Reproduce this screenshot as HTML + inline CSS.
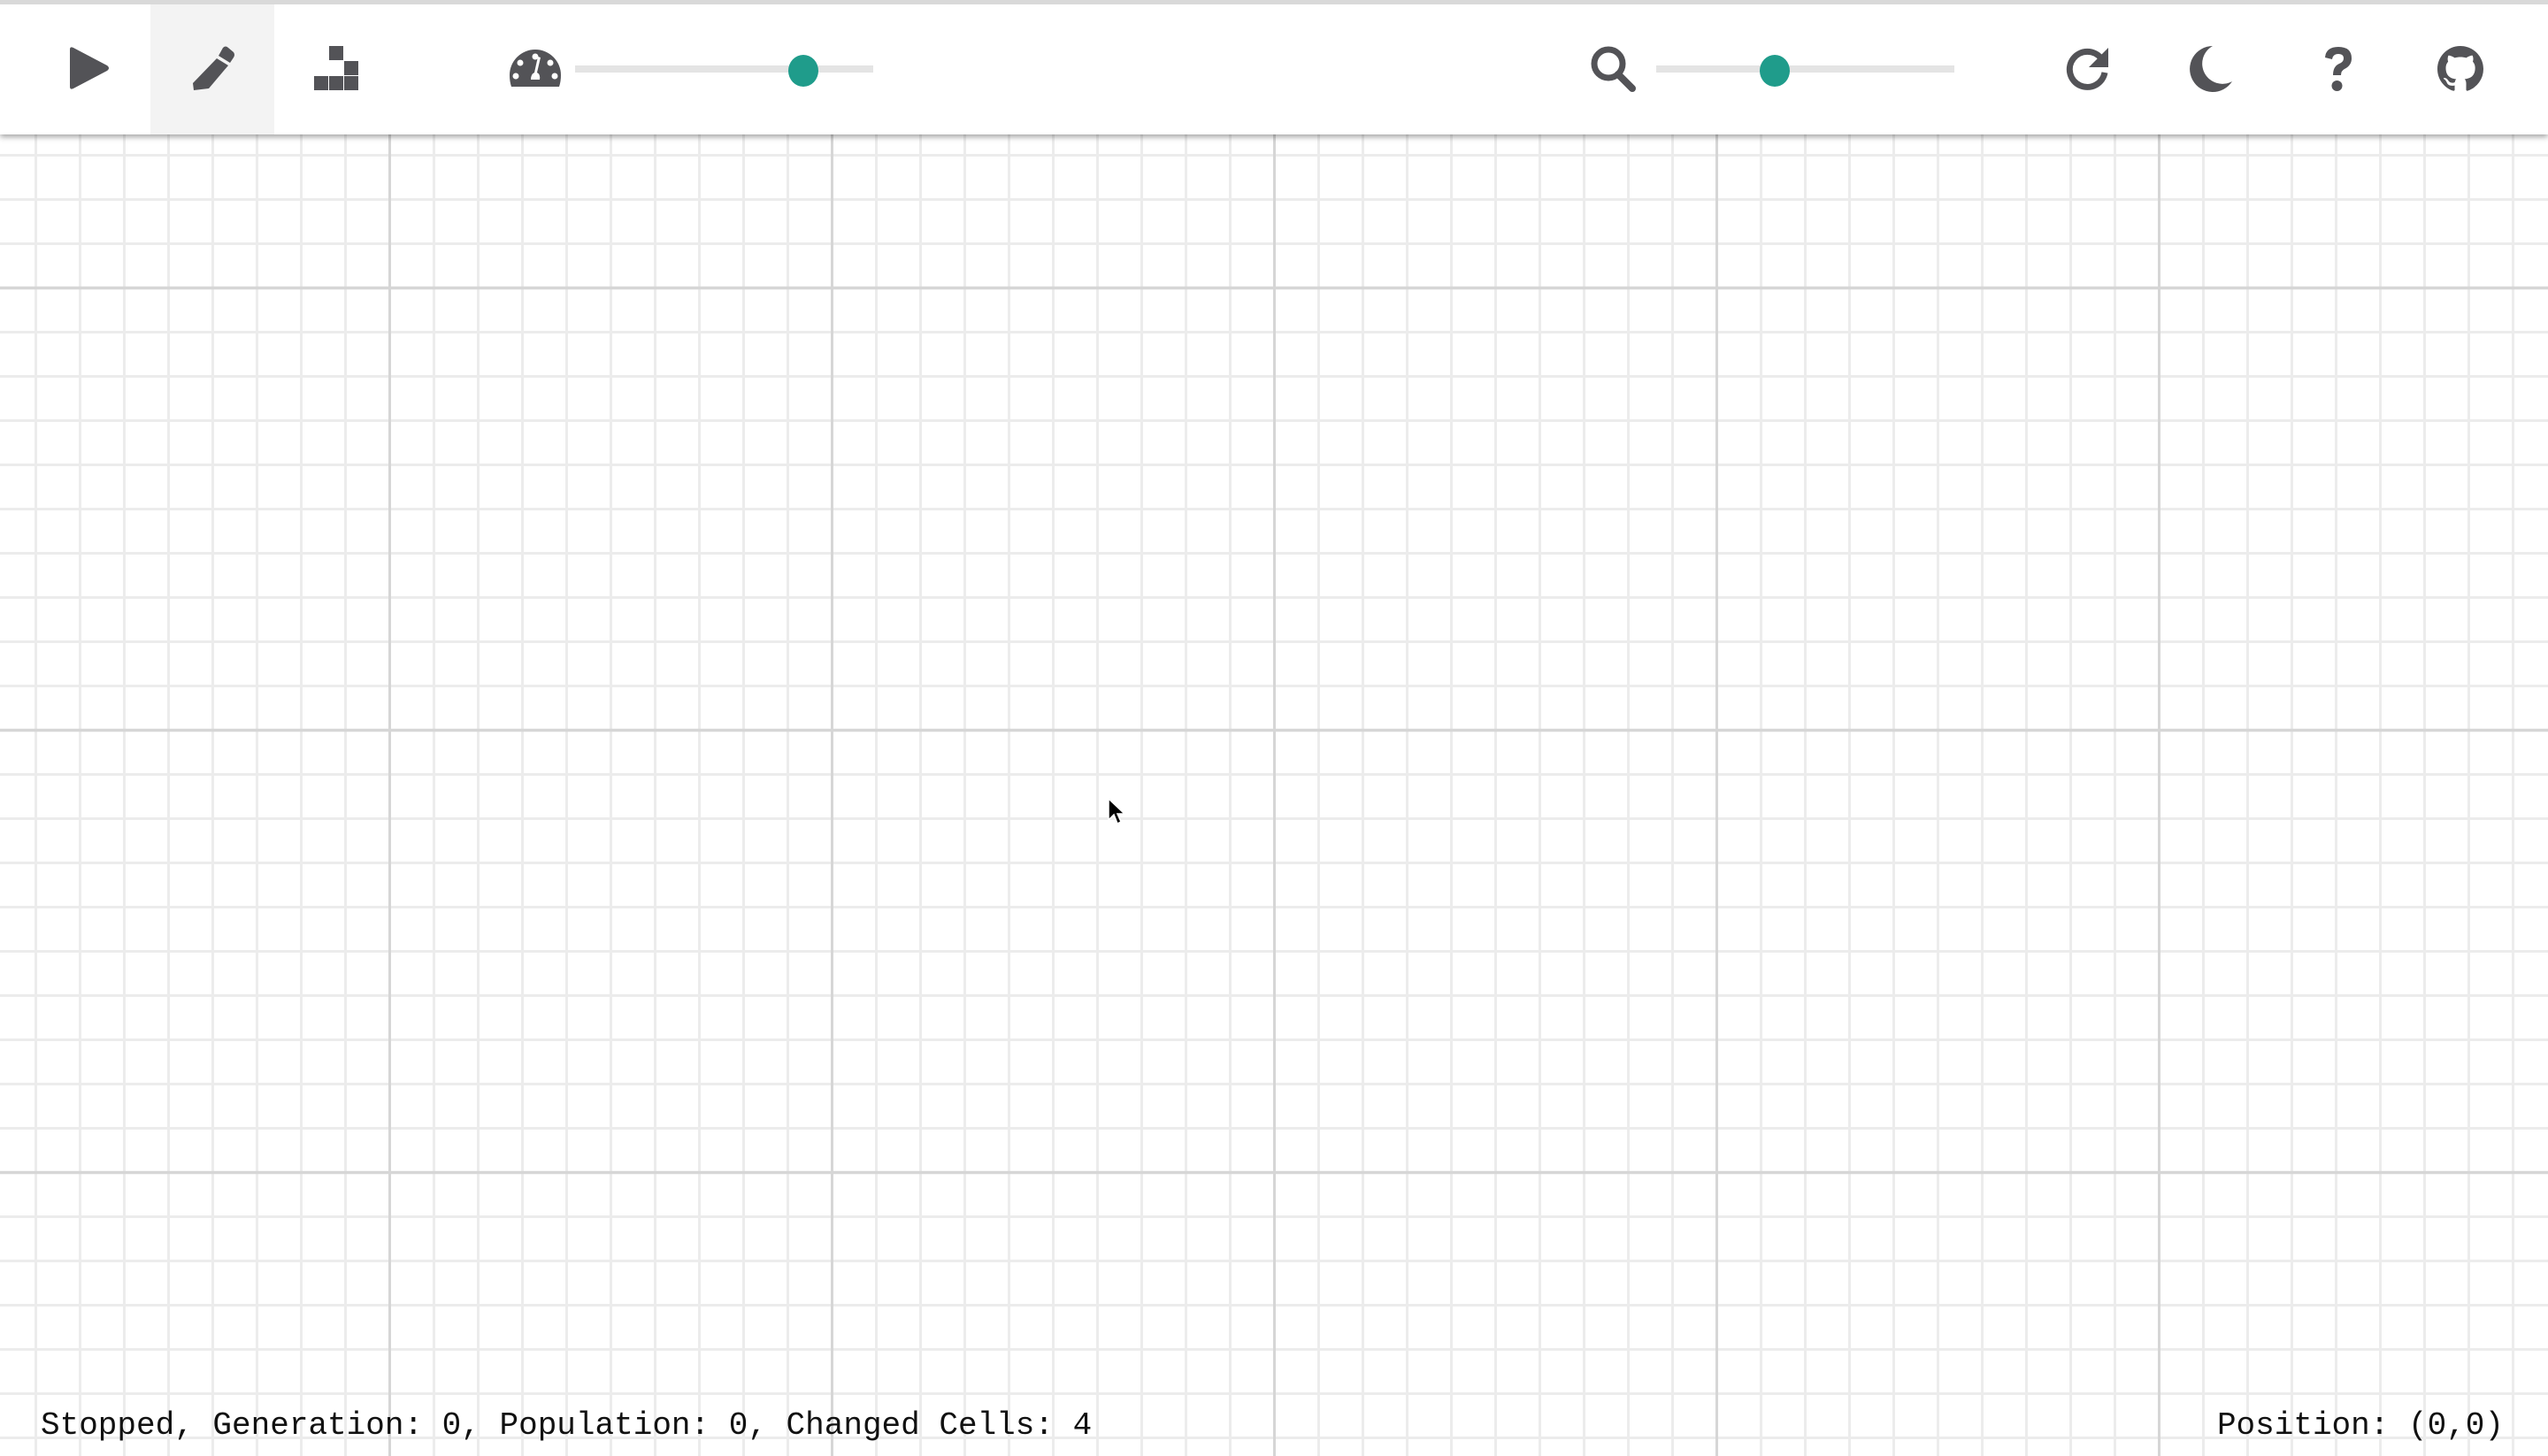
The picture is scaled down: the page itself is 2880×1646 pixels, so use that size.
<!DOCTYPE html>
<html><head><meta charset="utf-8">
<style>
html,body{margin:0;padding:0;width:2880px;height:1646px;overflow:hidden;background:#fff;}
#grid{position:absolute;left:0;top:0;width:2880px;height:1646px;
background-image:
linear-gradient(to right, transparent 439px, #d6d6d6 439px, #d6d6d6 442px, transparent 442px),
linear-gradient(to bottom, transparent 324px, #d6d6d6 324px, #d6d6d6 327px, transparent 327px),
linear-gradient(to right, transparent 39px, #ececec 39px, #ececec 42px, transparent 42px),
linear-gradient(to bottom, transparent 24px, #ececec 24px, #ececec 27px, transparent 27px);
background-size:500px 100%,100% 500px,50px 100%,100% 50px;
background-position:0 0,0 0,0 0,0 0;}
#bar{position:absolute;left:0;top:0;width:2880px;height:152px;background:#fff;border-top:5px solid #d9d9d9;box-sizing:border-box;box-shadow:0 3px 6px rgba(0,0,0,0.35);}
.ic{position:absolute;}
.track{position:absolute;height:8px;background:#e4e4e4;top:74px;}
.thumb{position:absolute;width:34px;height:36px;border-radius:50%;background:#1f9c8b;top:62px;}
.st{position:absolute;top:1594px;font-family:"Liberation Mono",monospace;font-size:36px;color:#111;white-space:pre;line-height:36px;}
</style></head><body>
<div id="grid"></div>
<div id="bar"></div>
<div style="position:absolute;left:170px;top:5px;width:140px;height:147px;background:#f3f3f3;"></div>
<svg class="ic" style="left:79px;top:52px" width="46" height="50" viewBox="0 0 46 50"><path d="M0 4 Q0 0 4 2 L42 22 Q46 25 42 28 L4 48 Q0 50 0 46 Z" fill="#535357"/></svg>
<svg class="ic" style="left:214px;top:52px" width="52" height="50" viewBox="0 0 52 50"><path d="M38 2 Q41 -1 44 2 L50 7 Q52 10 50 13 L46 19 L33 11 Z" fill="#535357"/><path d="M31 14 L44 22 L22 48 L5 50 L4 42 Z" fill="#535357"/></svg>
<svg class="ic" style="left:355px;top:52px" width="52" height="50" viewBox="0 0 52 50"><g fill="#535357"><rect x="17" y="0" width="16" height="16"/><rect x="34" y="17" width="16" height="16"/><rect x="0" y="34" width="16" height="16"/><rect x="17" y="34" width="16" height="16"/><rect x="34" y="34" width="16" height="16"/></g></svg>
<svg class="ic" style="left:576px;top:56px" width="58" height="44" viewBox="0 0 58 44"><path d="M29 0 A29 29 0 0 1 58 29 Q58 36 56 42 L2 42 Q0 36 0 29 A29 29 0 0 1 29 0Z" fill="#535357"/><g fill="#fff"><circle cx="29" cy="8" r="3.5"/><circle cx="12" cy="15" r="3.5"/><circle cx="46" cy="15" r="3.5"/><circle cx="7" cy="30" r="3.5"/><circle cx="51" cy="30" r="3.5"/><path d="M32 8 L35 9 L31 26 Q35 28 34 34 L24 34 Q24 28 28 26Z"/></g></svg>
<div class="track" style="left:650px;width:337px"></div>
<div class="thumb" style="left:891px"></div>
<svg class="ic" style="left:1798px;top:52px" width="52" height="52" viewBox="0 0 52 52"><circle cx="20" cy="20" r="16" fill="none" stroke="#535357" stroke-width="7"/><path d="M31 32 L47 48" stroke="#535357" stroke-width="8" stroke-linecap="round"/></svg>
<div class="track" style="left:1872px;width:337px"></div>
<div class="thumb" style="left:1989px"></div>
<svg class="ic" style="left:2335px;top:52px" width="52" height="52" viewBox="0 0 52 52"><path d="M40 14 A20 20 0 1 0 44 30" fill="none" stroke="#535357" stroke-width="7"/><path d="M48 2 L48 24 L26 24 Z" fill="#535357"/></svg>
<svg class="ic" style="left:2475px;top:52px" width="50" height="52" viewBox="0 0 50 52"><path d="M26 0 A26 26 0 1 0 48 40 A22 22 0 0 1 26 0Z" fill="#535357"/></svg>
<svg class="ic" style="left:2623px;top:51px" width="40" height="54" viewBox="0 0 40 54"><path d="M5 14 Q6 2 20 2 Q35 2 35 15 Q35 23 27 27 Q23 29 23 34 L14 34 Q14 24 21 21 Q26 19 26 15 Q26 10 20 10 Q14 10 13 16 Z" fill="#535357"/><circle cx="18.5" cy="46" r="6" fill="#535357"/></svg>
<svg class="ic" style="left:2755px;top:52px" width="52" height="52" viewBox="0 0 16 16"><path fill="#535357" d="M8 0C3.58 0 0 3.58 0 8c0 3.540 2.29 6.53 5.47 7.59.4.07.55-.17.55-.38 0-.19-.01-.82-.01-1.49-2.01.37-2.53-.49-2.69-.94-.09-.23-.48-.94-.82-1.130-.28-.15-.68-.52-.01-.53.63-.01 1.08.58 1.23.82.72 1.21 1.87.87 2.33.66.07-.52.28-.87.51-1.07-1.78-.2-3.64-.89-3.64-3.95 0-.87.31-1.59.82-2.15-.08-.2-.36-1.02.08-2.12 0 0 .67-.21 2.2.82.64-.18 1.32-.27 2-.27.68 0 1.36.09 2 .27 1.53-1.04 2.2-.82 2.2-.82.44 1.1.16 1.92.08 2.12.51.56.82 1.27.82 2.15 0 3.07-1.87 3.75-3.65 3.950.29.25.54.73.54 1.48 0 1.07-.01 1.93-.01 2.2 0 .21.15.46.55.38A8.013 8.013 0 0016 8c0-4.42-3.58-8-8-8z"/></svg>
<svg class="ic" style="left:1251px;top:901px" width="24" height="34" viewBox="0 0 24 34"><path d="M2 2 L2 26 L8 20 L12 30 L16 28 L12 19 L20 19 Z" fill="#000" stroke="#fff" stroke-width="1.5"/></svg>
<div class="st" style="left:46px">Stopped, Generation: 0, Population: 0, Changed Cells: 4</div>
<div class="st" style="right:50px">Position: (0,0)</div>
</body></html>
